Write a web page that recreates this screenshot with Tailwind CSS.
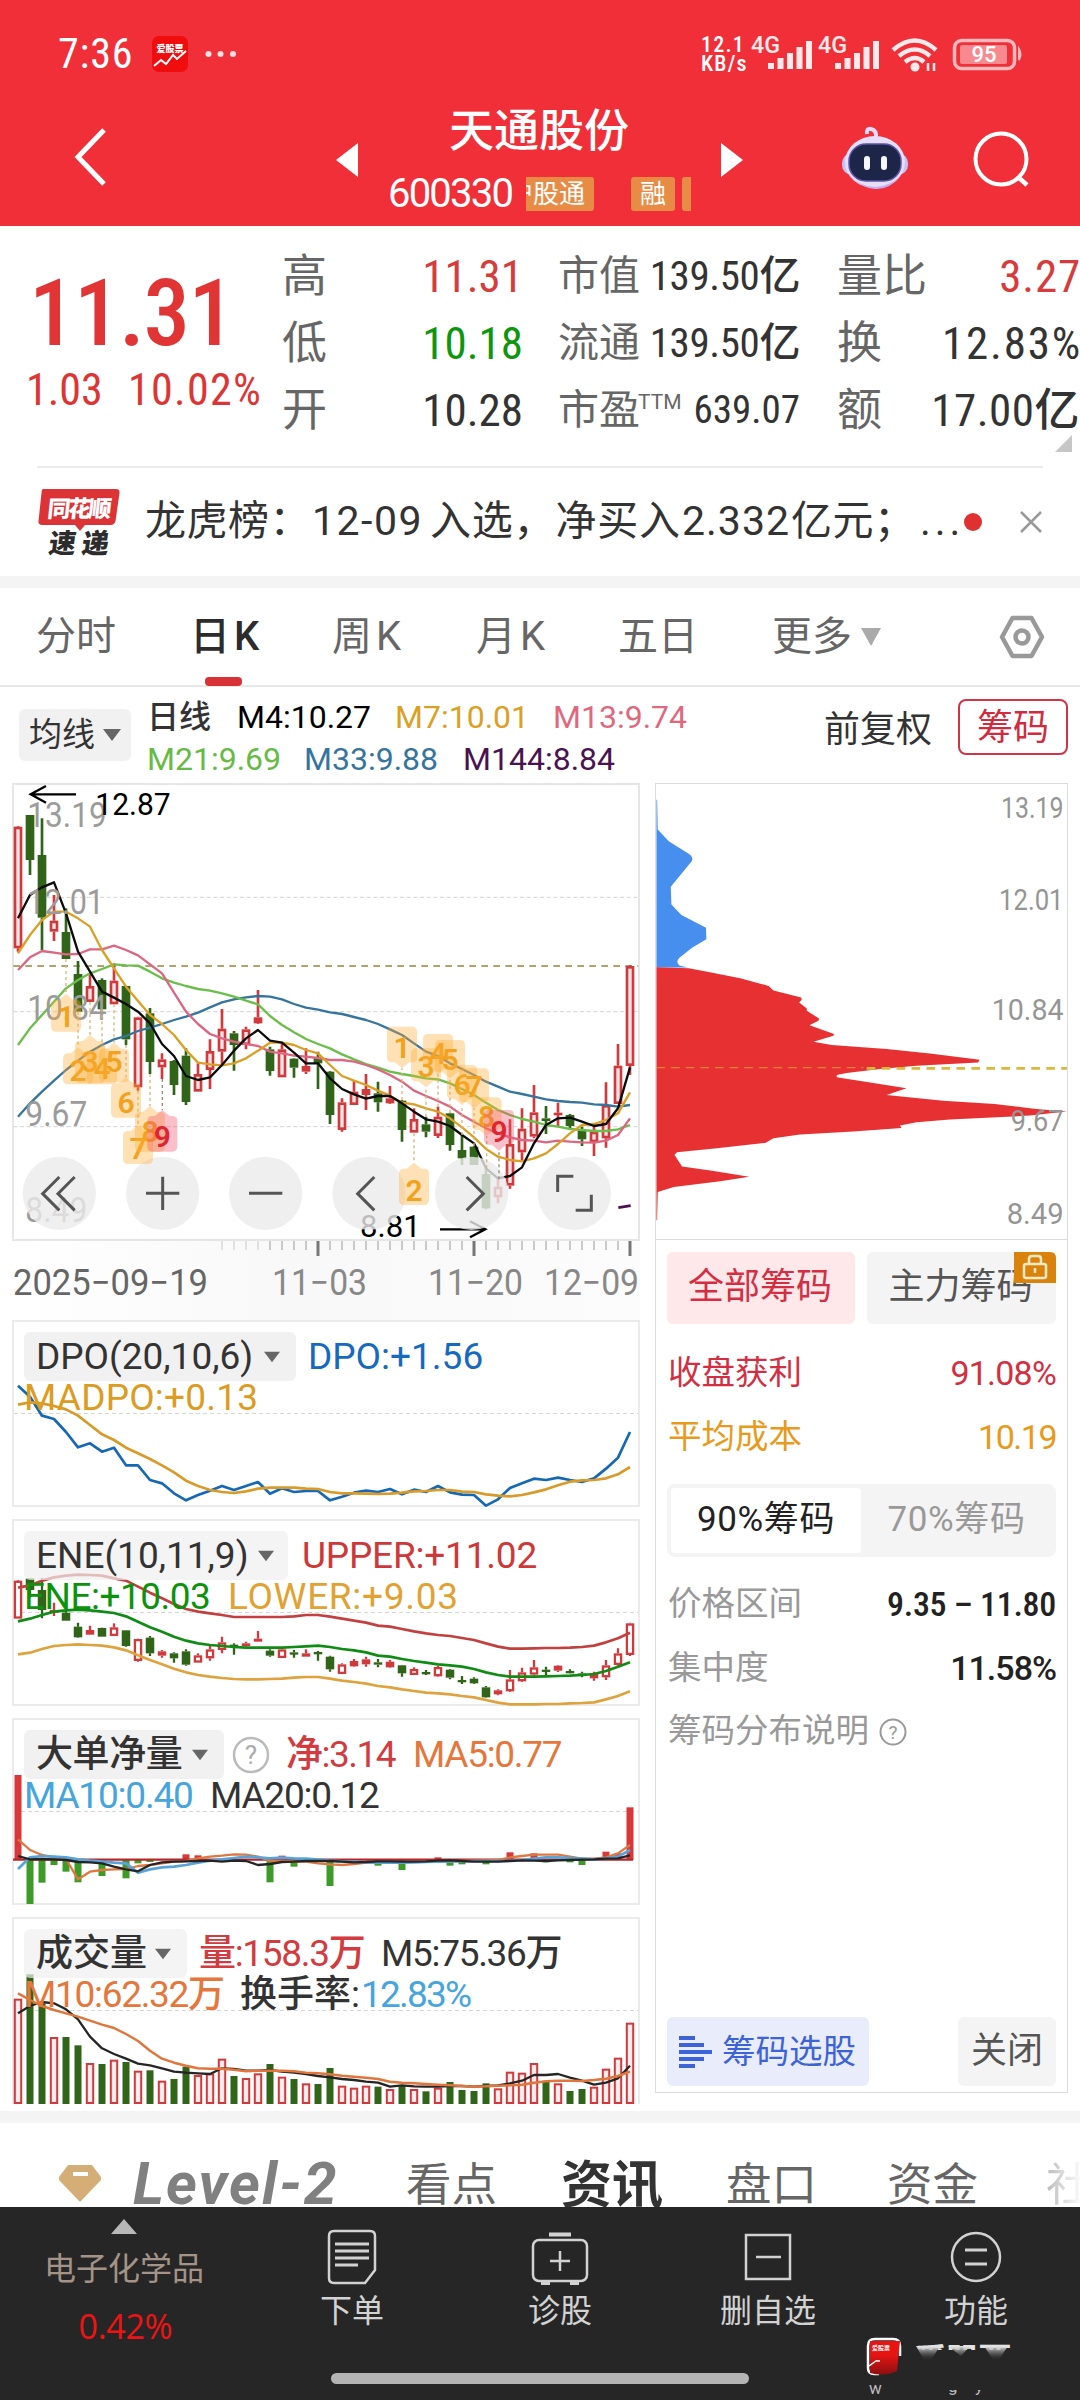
<!DOCTYPE html>
<html lang="zh-CN">
<head>
<meta charset="utf-8">
<title>天通股份 600330</title>
<script src="https://cdn.jsdelivr.net/npm/@tailwindcss/browser@4"></script>
</head>
<body class="bg-white">
<div class="w-[1080px] h-[2400px] overflow-hidden flex flex-col bg-white text-[#333] font-['Roboto','Noto_Sans_CJK_SC',sans-serif] whitespace-nowrap">

<!-- header -->
<header class="h-[226px] shrink-0 bg-[#f12f38] text-white flex flex-col">
  <div class="h-[108px] flex items-center pl-[58px] pr-[57px]">
    <span class="text-[42px] leading-none w-[94px] font-stretch-semi-condensed tracking-[0.8px]">7:36</span>
    <svg class="w-9 h-9" viewBox="0 0 36 36"><rect width="36" height="36" rx="7" fill="#f00d0d"/><text x="18" y="15.500" text-anchor="middle" font-size="9" font-weight="900" fill="#fff">爱股票</text><path d="M2 30l7-6 5 4 7-9 4 4 9-8" fill="none" stroke="#fff" stroke-width="2"/></svg>
    <svg class="w-8 h-2 ml-[17px]" viewBox="0 0 32 8"><g fill="#ffe0e0"><circle cx="3.500" cy="4" r="3"/><circle cx="15.500" cy="4" r="3"/><circle cx="28" cy="4" r="3"/></g></svg>
    <div class="ml-auto flex items-center">
      <div class="w-[51px] text-[22px] leading-[19px] font-medium font-stretch-semi-condensed tracking-[1.2px]">12.1<br>KB/s</div>
      <svg class="w-[130px] h-9 overflow-visible" viewBox="752 36 130 36"><g fill="#ffe9ea"><text x="751" y="53" font-size="23" font-weight="500" textLength="29" lengthAdjust="spacingAndGlyphs">4G</text><text x="818" y="53" font-size="23" font-weight="500" textLength="29" lengthAdjust="spacingAndGlyphs">4G</text>
      <path d="M768 63h6v6h-6zM777.500 58h6v11h-6zM787 53h6v16h-6zM796.500 47h6v22h-6zM806 41h6v28h-6zM835 63h6v6h-6zM844.500 58h6v11h-6zM854 53h6v16h-6zM863.500 47h6v22h-6zM873 41h6v28h-6z"/></g></svg>
      <svg class="w-12 h-9 ml-[9px]" viewBox="891 36 48 36"><g fill="none" stroke="#ffe9ea" stroke-width="4.500"><path d="M893 50q22-19 43 0M899 56q16-13 31 0M905 62q10-8 19 0"/></g><circle cx="915" cy="67" r="4.500" fill="#ffe9ea"/><path d="M928 63v8M934 63v8" stroke="#ffe9ea" stroke-width="2.500"/></svg>
      <svg class="w-[72px] h-9 ml-[12px]" viewBox="951 36 72 36"><rect x="954.500" y="40.500" width="60" height="28" rx="7" fill="none" stroke="#f9b9bd" stroke-width="3.500"/><rect x="960" y="45" width="47" height="19" rx="2" fill="#f88a8f"/><path d="M1019 49q3 5 0 11z" fill="#f9b9bd" stroke="#f9b9bd" stroke-width="2"/><text x="984" y="62" text-anchor="middle" font-size="22" font-weight="500" fill="#fff">95</text></svg>
    </div>
  </div>
  <div class="h-[118px] flex relative">
    <svg class="w-[34px] h-[62px] mt-[18px] ml-[73px]" viewBox="0 0 34 62"><path d="M31 4L5 31l26 27" fill="none" stroke="#fff" stroke-width="5"/></svg>
    <svg class="w-[22px] h-[34px] ml-[229px] mt-[35px]" viewBox="0 0 22 34"><path d="M22 0v34L0 17z" fill="#fff"/></svg>
    <div class="w-[363px] flex flex-col items-center">
      <div class="text-[45px] leading-[45px] font-medium -ml-px mt-px">天通股份</div>
      <div class="flex w-full pl-[30px] mt-5 items-center">
        <span class="text-[40px] leading-[40px] w-[138px] tracking-[-1.8px]">600330</span>
        <div class="w-[165px] h-[34px] flex overflow-hidden text-[26px] leading-[34px]">
          <span class="bg-[#e88c45] rounded-r-[3px] w-[68px] h-[34px] flex justify-end pr-[9px] shrink-0 overflow-hidden">沪股通</span>
          <span class="bg-[#e88c45] rounded-[3px] w-[44px] ml-[37px] text-center shrink-0">融</span>
          <span class="bg-[#e88c45] rounded-l-[3px] w-[9px] ml-[7px] shrink-0"></span>
        </div>
      </div>
    </div>
    <svg class="w-[22px] h-[34px] mt-[35px]" viewBox="0 0 22 34"><path d="M0 0v34l22-17z" fill="#fff"/></svg>
    <svg class="w-[68px] h-[64px] ml-[98px] mt-[18px]" viewBox="0 0 68 64"><path d="M26 8q-1-6 4-5 6 1 5 10" fill="none" stroke="#e6dcfa" stroke-width="4"/><rect x="1" y="27" width="66" height="22" rx="10" fill="#c3c3f5"/><ellipse cx="34" cy="36" rx="30" ry="26" fill="#e6defb"/><path d="M8 50q26 22 52 0-12 14-26 13T8 50z" fill="#c3b0f0"/><rect x="8" y="18" width="52" height="37" rx="17" fill="#1d2648" stroke="#5a55a8" stroke-width="1.500"/><path d="M26 33v8M43 33v8" stroke="#f6f6ff" stroke-width="6" stroke-linecap="round"/></svg>
    <svg class="w-[58px] h-[58px] ml-[63px] mt-[22px]" viewBox="0 0 58 58"><circle cx="29" cy="29" r="25.500" fill="none" stroke="#fff" stroke-width="4"/><path d="M46 47l9 8" stroke="#fff" stroke-width="4.500"/></svg>
  </div>
</header>

<!-- quote -->
<section class="h-[240px] shrink-0 flex relative font-[450]">
  <div class="w-[282px] pt-[48px] text-[#dd3535]">
    <div class="text-[93px] leading-[80px] pl-[29px] font-medium font-stretch-condensed tracking-[-1.5px] text-[#e13434]">11.31</div>
    <div class="flex text-[44px] leading-[50px] mt-[11px] pl-[26px] font-stretch-semi-condensed"><span class="w-[102px]">1.03</span><span class="tracking-[1.3px]">10.02%</span></div>
  </div>
  <div class="w-[241px] pt-[17px] text-[45px] leading-[67px] text-[#666] font-stretch-semi-condensed">
    <div class="flex justify-between"><span class="font-normal">高</span><span class="text-[#d63c3c]">11.31</span></div>
    <div class="flex justify-between"><span class="font-normal">低</span><span class="text-[#0f960f]">10.18</span></div>
    <div class="flex justify-between"><span class="font-normal">开</span><span class="text-[#333]">10.28</span></div>
  </div>
  <div class="w-[242px] ml-[35px] pt-[17px] text-[41px] leading-[67px] text-[#666] font-stretch-semi-condensed">
    <div class="flex justify-between"><span class="font-normal">市值</span><span class="text-[#333] tracking-[-0.4px]">139.50亿</span></div>
    <div class="flex justify-between"><span class="font-normal">流通</span><span class="text-[#333] tracking-[-0.4px]">139.50亿</span></div>
    <div class="flex justify-between"><span class="flex font-normal">市盈<span class="text-[21px] leading-[50px] -ml-0.5 font-stretch-normal">TTM</span></span><span class="text-[#333] text-[39px]">639.07</span></div>
  </div>
  <div class="w-[243px] ml-[37px] pt-[17px] text-[45px] leading-[67px] text-[#666] font-stretch-semi-condensed">
    <div class="flex justify-between"><span class="font-normal">量比</span><span class="text-[#d63c3c] tracking-[0.8px] -mr-px">3.27</span></div>
    <div class="flex justify-between"><span class="font-normal">换</span><span class="text-[#333] tracking-[1.8px] -mr-0.5">12.83%</span></div>
    <div class="flex justify-between"><span class="font-normal">额</span><span class="text-[#333] tracking-[0.5px]">17.00亿</span></div>
  </div>
  <svg class="absolute right-2 bottom-[14px] w-[17px] h-[17px]" viewBox="0 0 17 17"><path d="M17 0v17H0z" fill="#c6c6c6"/></svg>
</section>

<!-- news -->
<section class="h-[110px] shrink-0 mx-[37px] border-t-2 border-[#ebebeb] flex items-center">
  <svg class="w-[84px] h-[70px] -mt-px" viewBox="0 0 84 70"><path d="M6 2h73q4 0 3.500 4l-4 28q-1 4-5 4H48l-5 6-5-6H5q-4 0-3.500-4l3-28q0-4 2-4z" fill="#dc3337"/><text x="10" y="30" transform="skewX(-6) translate(3 0)" font-size="23" font-weight="900" fill="#fff" textLength="64">同花顺</text><text x="13" y="66" transform="skewX(-8) translate(7 0)" font-size="27" font-weight="900" fill="#2c2c2c" textLength="60">速递</text></svg>
  <span class="ml-6 text-[41px] text-[#333] w-[826px] flex"><span class="w-[167px] tracking-[0.5px]">龙虎榜：</span><span class="w-[118px] tracking-[1.5px]">12-09</span><span class="w-[252px] tracking-[0.8px]">入选，净买入</span><span class="w-[109px] tracking-[1px]">2.332</span><span class="w-[129px] tracking-[0.5px]">亿元；</span><span class="tracking-[4px]">...</span></span>
  <span class="size-[18px] rounded-full bg-[#e03030] -ml-[7px]"></span>
  <svg class="w-6 h-6 ml-[37px]" viewBox="0 0 24 24"><path d="M2 2l20 20M22 2L2 22" stroke="#999" stroke-width="2.500"/></svg>
</section>
<div class="h-3 shrink-0 bg-[#f4f4f4]"></div>

<!-- period tabs -->
<nav class="h-[99px] shrink-0 border-b-2 border-[#e8e8e8] flex items-center text-[40px] text-[#666] pl-9 relative">
  <span class="w-[154px]">分时</span>
  <span class="w-[142px] font-medium text-[#2c2c2c] tracking-[4px]">日K</span>
  <span class="w-[144px] tracking-[4px]">周K</span>
  <span class="w-[142px] tracking-[4px]">月K</span>
  <span class="w-[154px]">五日</span>
  <span>更多</span>
  <svg class="w-5 h-[18px] ml-[9px]" viewBox="0 0 20 18"><path d="M0 0h20L10 18z" fill="#aaa"/></svg>
  <svg class="w-[46px] h-[44px] ml-[118px]" viewBox="0 0 46 44"><path d="M13.500 3h19L43 22 32.500 41h-19L3 22z" fill="none" stroke="#999" stroke-width="4.500" stroke-linejoin="round"/><circle cx="23" cy="22" r="6.500" fill="none" stroke="#999" stroke-width="4.500"/></svg>
  <span class="absolute left-[205px] bottom-[-1px] w-[37px] h-[9px] rounded-[4px] bg-[#d83238]"></span>
</nav>

<!-- average line legend -->
<section class="h-[96px] shrink-0 flex">
  <div class="ml-[19px] mt-[22px] w-[112px] h-[52px] rounded-md bg-[#f1f1f1] flex items-center justify-center gap-2 text-[33px]">均线<svg class="w-[18px] h-3" viewBox="0 0 18 12"><path d="M0 0h18L9 12z" fill="#666"/></svg></div>
  <div class="ml-[16px] mt-[9px] text-[32px] leading-[42px] w-[677px] font-[450]">
    <div class="flex"><span class="w-[90px] font-medium">日线</span><span class="w-[158px] text-black">M4:10.27</span><span class="w-[158px] text-[#dba025]">M7:10.01</span><span class="text-[#e0687e]">M13:9.74</span></div>
    <div class="flex"><span class="w-[157px] text-[#66bb45]">M21:9.69</span><span class="w-[159px] text-[#35749f]">M33:9.88</span><span class="text-[#4a1250]">M144:8.84</span></div>
  </div>
  <div class="text-[36px] leading-[86px] w-[134px]">前复权</div>
  <div class="mt-3 w-[110px] h-14 border-2 border-[#cf3547] rounded-lg text-[#d02c40] text-[36px] leading-[54px] text-center">筹码</div>
</section>

<main class="h-[1328px] shrink-0 flex pl-3">
  <div class="w-[628px] flex flex-col">
    <svg id="kline" class="w-[628px] h-[458px] shrink-0" viewBox="36 39 1884 1374"></svg>
    <svg id="axis" class="w-[628px] h-[79px] shrink-0" viewBox="12 1241 628 79"></svg>

    <div class="relative h-[187px] border-2 border-[#ebebeb] shrink-0 font-[450]">
      <svg id="dpo" class="absolute -left-0.5 -top-0.5 w-[628px] h-[187px]" viewBox="12 1320 628 187"></svg>
      <div class="relative pt-2.5 pl-2.5 text-[37px] leading-[49px]">
        <div class="flex"><span class="w-[272px] h-[49px] bg-[#f0f0f0]/90 rounded-md pl-3 flex items-center">DPO(20,10,6)<svg class="w-4 h-3 ml-[11px]" viewBox="0 0 18 12"><path d="M0 0h18L9 12z" fill="#666"/></svg></span><span class="ml-3 text-[#156ac0]">DPO:+1.56</span></div>
        <div class="leading-[33px] text-[#dc9c22] tracking-[0.2px]">MADPO:+0.13</div>
      </div>
    </div>

    <div class="relative h-[187px] border-2 border-[#ebebeb] mt-3 shrink-0 font-[450]">
      <svg id="ene" class="absolute -left-0.5 -top-0.5 w-[628px] h-[187px]" viewBox="12 1519 628 187"></svg>
      <div class="relative pt-2.5 pl-2.5 text-[37px] leading-[49px]">
        <div class="flex"><span class="w-[264px] h-[49px] bg-[#f0f0f0]/70 rounded-md pl-3 flex items-center">ENE(10,11,9)<svg class="w-4 h-3 ml-[9px]" viewBox="0 0 18 12"><path d="M0 0h18L9 12z" fill="#666"/></svg></span><span class="ml-3.5 text-[#cf3838] tracking-[-0.2px]">UPPER:+11.02</span></div>
        <div class="leading-[33px] flex"><span class="w-[204px] text-[#0c930c] tracking-[-0.5px]">ENE:+10.03</span><span class="text-[#e2a232] tracking-[0.7px]">LOWER:+9.03</span></div>
      </div>
    </div>

    <div class="relative h-[187px] border-2 border-[#ebebeb] mt-3 shrink-0 font-[450]">
      <svg id="net" class="absolute -left-0.5 -top-0.5 w-[628px] h-[187px]" viewBox="12 1718 628 187"></svg>
      <div class="relative pt-2.5 pl-2.5 text-[37px] leading-[49px]">
        <div class="flex"><span class="w-[200px] h-[49px] bg-[#f0f0f0]/90 rounded-md pl-3 flex items-center tracking-[-0.4px]">大单净量<svg class="w-4 h-3 ml-[10px]" viewBox="0 0 18 12"><path d="M0 0h18L9 12z" fill="#666"/></svg></span><svg class="w-[38px] h-[38px] ml-2 mt-1.5" viewBox="0 0 38 38"><circle cx="19" cy="19" r="17" fill="none" stroke="#bbb" stroke-width="2.500"/><text x="19" y="28" font-size="26" text-anchor="middle" fill="#aaa">?</text></svg><span class="ml-4 w-[127px] text-[#d23b40] tracking-[-1.5px]">净:3.14</span><span class="text-[#e5773d] tracking-[-1.3px]">MA5:0.77</span></div>
        <div class="leading-[33px] flex tracking-[-1.2px]"><span class="w-[186px] text-[#46a5dc]">MA10:0.40</span><span>MA20:0.12</span></div>
      </div>
    </div>

    <div class="relative h-[187px] border-2 border-b-0 border-[#ebebeb] mt-3 shrink-0 font-[450]">
      <svg id="vol" class="absolute -left-0.5 -top-0.5 w-[628px] h-[187px]" viewBox="12 1917 628 187"></svg>
      <div class="relative pt-2.5 pl-2.5 text-[37px] leading-[49px]">
        <div class="flex"><span class="w-[163px] h-[49px] bg-[#f0f0f0]/70 rounded-md pl-3 flex items-center">成交量<svg class="w-4 h-3 ml-[8px]" viewBox="0 0 18 12"><path d="M0 0h18L9 12z" fill="#666"/></svg></span><span class="ml-3 w-[182px] text-[#d23b40] tracking-[-1.3px]">量:158.3万</span><span class="tracking-[-1.3px]">M5:75.36万</span></div>
        <div class="leading-[33px] flex tracking-[-1.3px]"><span class="w-[216px] text-[#e5773d]">M10:62.32万</span><span class="w-[121px] tracking-normal">换手率:</span><span class="text-[#46a5dc] tracking-[-1.8px]">12.83%</span></div>
      </div>
    </div>
  </div>

  <!-- chip distribution -->
  <aside class="ml-[15px] w-[413px] h-[1310px] border border-[#dcdcdc] flex flex-col">
    <svg id="chips" class="w-[411px] h-[456px] shrink-0 border-b border-[#dcdcdc]" viewBox="48 43 1233 1368"></svg>
    <div class="flex flex-col px-[11px] pt-3 text-[33.500px] grow">
      <div class="flex gap-3 h-[72px] text-[36px] leading-[71px] text-center relative">
        <span class="w-[188px] rounded-md bg-[#ffe8ea] text-[#d42e42] pr-0.5">全部筹码</span>
        <span class="w-[189px] rounded-md bg-[#f4f4f4] text-[#555] pr-0.5">主力筹码</span>
        <svg class="absolute right-0 top-0 w-[42px] h-[31px]" viewBox="0 0 42 31"><path d="M0 0h36q6 0 6 6v25H0z" fill="#d9820c"/><rect x="10" y="12" width="22" height="14" rx="2" fill="none" stroke="#ffe9c4" stroke-width="2.500"/><path d="M15 12V7q0-3 3-3h6q3 0 3 3v5M21 16v5" fill="none" stroke="#ffe9c4" stroke-width="2.500"/></svg>
      </div>
      <div class="flex justify-between items-center h-[64px] mt-[17px]"><span class="text-[#d42e42] ml-px">收盘获利</span><span class="text-[#d42e42] text-[34px] font-[450] tracking-[-0.8px]">91.08%</span></div>
      <div class="flex justify-between items-center h-[64px] text-[#e89a1c]"><span class="ml-px">平均成本</span><span class="text-[34px] font-[450] tracking-[-1.5px]">10.19</span></div>
      <div class="h-[73px] mt-[15px] rounded-lg bg-[#f4f4f4] p-1 flex leading-[64px] text-center"><span class="w-[190px] bg-white rounded text-[#222] text-[35px] tracking-[0.6px]">90%筹码</span><span class="grow text-[#999] text-[35px] tracking-[0.6px]">70%筹码</span></div>
      <div class="flex justify-between items-center h-[64px] mt-[15px]"><span class="text-[#999] ml-px">价格区间</span><span class="text-[#222] text-[34px] font-medium font-stretch-semi-condensed tracking-[-0.3px]">9.35 – 11.80</span></div>
      <div class="flex justify-between items-center h-[64px]"><span class="text-[#999] ml-px">集中度</span><span class="text-[#222] text-[34px] font-medium tracking-[-1px]">11.58%</span></div>
      <div class="flex items-center h-[63px] text-[#999] pl-px">筹码分布说明<svg class="w-7 h-7 ml-2.5" viewBox="0 0 28 28"><circle cx="14" cy="14" r="12.500" fill="none" stroke="#999" stroke-width="2"/><text x="14" y="20.500" font-size="19" text-anchor="middle" fill="#999">?</text></svg></div>
      <div class="mt-auto mb-[6px] flex justify-between h-[69px] leading-[65px]">
        <span class="w-[202px] rounded-md bg-[#e9ecfb] text-[#3c63d8] flex items-center gap-2.5 pl-3"><svg class="w-[33px] h-8" viewBox="0 0 33 32"><path d="M0 2h16M0 9h25M0 16h33M0 23h25M0 30h16" stroke="#3c63d8" stroke-width="4"/></svg><span>筹码选股</span></span>
        <span class="w-[98px] rounded-md bg-[#f4f4f4] text-[#555] text-[36px] leading-[69px] text-center">关闭</span>
      </div>
    </div>
  </aside>
</main>
<div class="h-3 shrink-0 bg-[#f4f4f4]"></div>

<!-- content tabs -->
<nav class="h-[84px] shrink-0 flex pl-[59px] text-[45.500px] leading-[125px] text-[#666] overflow-hidden">
  <svg class="w-[42px] h-[38px] mt-[41px] shrink-0" viewBox="0 0 42 38"><path d="M9 1h24l9 12q1 2-1 4L22 37q-1 1-2 0L1 17q-2-2-1-4z" fill="#d5ae77"/><rect x="14" y="8" width="15" height="4" fill="#fff"/></svg>
  <span class="ml-[32px] w-[273px] shrink-0 text-[59px] leading-[122px] font-bold italic text-[#808080] tracking-[2px]">Level-2</span>
  <span class="w-[155px] shrink-0">看点</span>
  <span class="w-[165px] shrink-0 text-[51px] font-bold text-[#333]">资讯</span>
  <span class="w-[161px] shrink-0">盘口</span>
  <span class="w-[159px] shrink-0">资金</span>
  <span class="bg-gradient-to-r from-[#bbb] to-white to-80% bg-clip-text text-transparent">社</span>
</nav>

<!-- bottom bar -->
<footer class="h-[193px] shrink-0 bg-[#262626] flex text-[32px] leading-[40px] text-[#d2d2d2] text-center relative">
  <div class="w-[248px] flex flex-col items-center text-[#a39487]">
    <svg class="w-[26px] h-[15px] mt-3" viewBox="0 0 26 15"><path d="M13 0l13 15H0z" fill="#b8b8b8"/></svg>
    <span class="mt-[15px]">电子化学品</span><span class="mt-[17px] ml-[3px] text-[34px] text-[#ee1414] font-['Open_Sans'] tracking-[-0.3px]">0.42%</span>
  </div>
  <div class="w-[208px] flex flex-col items-center"><svg class="w-[52px] h-[56px] mt-[22px]" viewBox="0 0 52 56"><path d="M8 2h36q5 0 5 5v34L39 54H8q-5 0-5-5V7q0-5 5-5z" fill="none" stroke="#d2d2d2" stroke-width="2.500"/><path d="M9 15h34M9 22h34M9 29h34M9 36h23" stroke="#d2d2d2" stroke-width="3"/></svg><span class="mt-1.5">下单</span></div>
  <div class="w-[208px] flex flex-col items-center"><svg class="w-[58px] h-[56px] mt-[22px]" viewBox="0 0 58 56"><rect x="2" y="11" width="54" height="41" rx="6" fill="none" stroke="#d2d2d2" stroke-width="2.500"/><path d="M18 5.500h22M10 54h9M39 54h9" stroke="#d2d2d2" stroke-width="4"/><path d="M29 22v20M19 32h20" stroke="#d2d2d2" stroke-width="2.500"/></svg><span class="mt-1.5">诊股</span></div>
  <div class="w-[208px] flex flex-col items-center"><svg class="w-[50px] h-[56px] mt-[22px]" viewBox="0 0 50 56"><path d="M3 6h44v44H3zM13 28h25" fill="none" stroke="#d2d2d2" stroke-width="2.500"/></svg><span class="mt-1.5">删自选</span></div>
  <div class="w-[208px] flex flex-col items-center"><svg class="w-[54px] h-[56px] mt-[22px]" viewBox="0 0 54 56"><circle cx="27" cy="28" r="24" fill="none" stroke="#d2d2d2" stroke-width="2.500"/><path d="M16 21h22M16 35h22" stroke="#d2d2d2" stroke-width="3"/></svg><span class="mt-1.5">功能</span></div>
  <span class="absolute left-[331px] top-[166px] w-[418px] h-[11px] rounded-full bg-[#b4b4b4]"></span>
  <svg class="absolute left-[860px] top-[128px] w-[220px] h-[65px]" viewBox="860 2335 220 65">
    <defs><linearGradient id="fade" x1="0" y1="0" x2="0" y2="1"><stop offset="0" stop-color="#e8e8e8"/><stop offset="1" stop-color="#262626" stop-opacity="0"/></linearGradient>
    <linearGradient id="redfade" x1="0" y1="0" x2="0" y2="1"><stop offset=".4" stop-color="#e81414"/><stop offset="1" stop-color="#8a1010"/></linearGradient>
    <clipPath id="top"><rect x="905" y="2340" width="175" height="10"/></clipPath>
    <clipPath id="low"><rect x="860" y="2384" width="220" height="14"/></clipPath></defs>
    <path d="M900 2356v-10q0-7-7-7h-18q-7 0-7 7v22q0 6 6 6h5" fill="none" stroke="#fff" stroke-width="2.500"/>
    <path d="M870 2341h30l-3 30q-12 6-27 2z" fill="url(#redfade)"/>
    <text x="872" y="2350" font-size="6" font-weight="700" fill="#fff">爱股票</text>
    <path d="M869 2366l7-5 4 0" fill="none" stroke="#fff" stroke-width="1.500"/>
    <g clip-path="url(#top)"><text x="914" y="2373" font-size="34" font-weight="700" fill="#e4e4e4" textLength="98">爱股票</text></g>
    <path d="M916 2346h24l-9 14h-7zM948 2346h22l-9 10zM984 2346h24l-10 15h-4z" fill="url(#fade)"/>
    <g clip-path="url(#low)" fill="#bbb" font-size="17"><text x="869" y="2394">w</text><text x="948" y="2392">g</text><text x="975" y="2392">y</text></g>
    <rect x="945" y="2382" width="50" height="8" fill="#262626"/>
  </svg>
</footer>
</div>

<script>
const RED='#d03a3c', GREEN='#2f6419';
const X=i=>18+12*i;
const el=id=>document.getElementById(id);
const poly=(pts,c,w)=>`<polyline points="${pts}" fill="none" stroke="${c}" stroke-width="${w}" stroke-linejoin="round"/>`;
const parse=s=>s.trim().split(/\s+/);
// candle: colour,high,top,bottom,low
function candles(s,fx,fy,bw,sw,fill){
  return parse(s).map((r,i)=>{
    const c=r[0]==='r'?RED:GREEN,[h,t,b,l]=r.slice(1).split(',').map(v=>fy(+v)),x=fx(i);
    let o=`<path d="M${x} ${h}V${t}M${x} ${b}V${l}" stroke="${c}" stroke-width="${sw}"/>`;
    if(r[0]==='r'&&b-t>sw*2.5) o+=`<rect x="${x-bw/2+sw/2}" y="${t+sw/2}" width="${bw-sw}" height="${b-t-sw}" fill="${fill}" stroke="${c}" stroke-width="${sw}"/>`;
    else o+=`<rect x="${x-bw/2}" y="${t}" width="${bw}" height="${Math.max(b-t,sw)}" fill="${c}"/>`;
    return o;
  }).join('');
}
const txt=(x,y,s,size,c,len,extra='')=>`<text x="${x}" y="${y}" font-size="${size}" fill="${c}" ${len?`textLength="${len}" lengthAdjust="spacingAndGlyphs"`:''} ${extra}>${s}</text>`;

// main chart, three units to a pixel
(()=>{
  const fx=i=>54+36*i;
  let o='<rect x="39" y="42" width="1878" height="1368" fill="#fff" stroke="#e6e6e6" stroke-width="6"/>';
  for(const y of [382,725,1070]) o+=`<path d="M40 ${y}H1915" stroke="#d4d4d4" stroke-width="3" stroke-dasharray="12 8"/>`;
  o+='<path d="M40 588H1915" stroke="#b3a26c" stroke-width="6" stroke-dasharray="20 16"/>';
  const grey='#9b9b9b', B='font-weight="450"';
  o+=candles(`r168,170,535,545 g135,135,270,315 g145,255,443,540 r375,452,485,513 g415,486,567,567 g573,612,725,725 r612,648,696,696 g625,630,718,718 r580,632,703,703 g648,648,808,825 r740,742,952,962 g714,730,876,912 r850,868,892,927 g870,873,945,975 g835,857,996,1005 r880,912,965,965 r808,843,900,957 r717,776,845,888 g783,790,825,902 r770,778,825,838 r660,742,760,762 g830,838,903,917 r820,838,922,922 g865,866,893,923 r835,888,905,912 g845,862,880,957
  g903,905,1035,1062 r985,997,1080,1085 r930,965,1005,1005 r912,957,975,1020 g935,970,997,1025 r948,985,1000,1002 g990,992,1080,1115 r1015,1047,1088,1088 g1040,1063,1085,1102 r1010,1040,1098,1104 g1028,1030,1125,1142 g1095,1140,1165,1185 g1128,1130,1185,1185 g1195,1212,1315,1318 r1228,1250,1282,1300 r1048,1122,1247,1256 r1015,1076,1147,1172 r945,1027,1100,1105 g1008,1045,1048,1092 r998,1028,1033,1070 g1032,1035,1068,1080 g1070,1078,1108,1128 r1062,1085,1117,1158 r937,1005,1105,1133 r822,887,1002,1002 r586,588,888,915`,fx,v=>v,26,8,'#fde8ea');
  const L=(s,c)=>{o+=poly(parse(s).map((y,i)=>fx(i)+','+y).join(' '),c,7)};
  L('1040 1000 965 932 900 872 845 825 808 798 783 773 762 750 740 728 712 697 688 682 678 680 688 702 713 719 727 732 741 750 762 778 795 820 845 858 880 897 915 935 950 965 972 980 988 993 996 998 1003 1005 1010 1005','#35749f');
  L('825 775 735 695 655 630 610 597 583 586 587 605 625 638 648 657 662 670 680 692 703 738 765 787 807 822 835 853 868 882 893 905 912 918 925 928 940 957 975 998 1020 1035 1047 1055 1065 1070 1077 1080 1083 1083 1078 1065','#6abf4b');
  L('600 562 543 548 553 552 538 538 527 540 556 583 610 668 725 762 792 805 815 822 828 845 850 857 860 864 870 870 875 885 898 915 935 962 978 993 1010 1035 1055 1075 1090 1102 1110 1112 1117 1112 1115 1117 1118 1112 1095 1045','#dd6680');
  L('550 495 450 425 425 445 470 540 595 650 693 735 762 795 840 878 883 886 880 865 842 818 818 825 840 850 885 918 932 945 962 977 998 1003 1015 1025 1045 1072 1102 1137 1160 1170 1174 1165 1150 1122 1090 1065 1062 1050 1030 967','#dc9f26');
  L('445 375 352 337 430 545 605 665 683 702 725 760 822 858 918 930 922 885 842 805 780 812 818 848 880 880 925 957 973 986 978 978 1000 1025 1048 1055 1068 1095 1120 1195 1225 1218 1192 1120 1065 1045 1043 1055 1068 1062 1015 892','#0c0c0c');
  o+=poly('1855,1313 1892,1307','#4a1250',8);
  o+=txt(82,170,'13.19',104,grey,238,B)+txt(82,433,'12.01',104,grey,230,B)+txt(82,750,'10.84',104,grey,238,B)+txt(76,1068,'9.67',104,grey,186,B)+txt(76,1357,'8.49',104,grey,186,B);
  o+=txt(286,134,'12.87',93,'#000',226)+txt(1080,1402,'8.81',93,'#000',182);
  o+='<path d="M92 73H228M138 48L92 73l46 25M1320 1378h136M1410 1354l46 24-46 24" fill="none" stroke="#000" stroke-width="7"/>';
  // round tool buttons
  const C='stroke="#555" stroke-width="9" fill="none"';
  for(const x of [178,488,797,1107,1415,1723]) o+=`<circle cx="${x}" cy="1270" r="110" fill="#ebebeb" opacity=".8"/>`;
  o+=`<path ${C} d="M178 1221l-50 50 50 50M224 1221l-50 50 50 50M438 1270h100M488 1220v100M747 1270h100M1123 1221l-50 50 50 50M1400 1221l50 50-50 50M1673 1266v-47h47M1774 1274v47h-47"/>`;
  // sequence markers: x, top, bottom, digit, baseline, direction, other end of the leader line
  for(const [x,t,b,d,base,up,from] of [[198,672,785,1,772,1,567],[234,832,943,2,932,1,725],[270,795,940,3,905,1,696],[306,825,943,4,928,1,718],[342,818,937,5,905,1,703],[378,922,1043,6,1030,1,825],[414,1065,1182,7,1168,1,962],[450,1008,1145,8,1115,1,912],[487,1020,1145,9,1130,1,927],
    [1206,770,895,1,865,0,990],[1278,835,952,3,920,0,1040],[1314,792,912,4,883,0,1010],[1350,810,925,5,900,0,1028],[1386,885,1005,6,975,0,1095],[1422,895,1015,7,980,0,1128],[1460,982,1098,8,1070,0,1195],[1497,1020,1142,9,1115,0,1228],[1242,1178,1305,2,1292,1,1090]]){
    const red=d===9, c=red?'#f0506a':'#ffac33', k=red?'#e02430':'#f2a21e';
    const w=45, y0=up?t+18:t, y1=up?b:b-18;
    o+=`<path d="M${x} ${from}V${up?t:b}" stroke="${red?'#9a8a78':'#dbb573'}" stroke-width="4" stroke-dasharray="9 9"/>`;
    o+=`<rect x="${x-w}" y="${y0}" width="90" height="${y1-y0}" rx="14" fill="${c}" opacity=".36"/>`;
    o+=`<path d="${up?`M${x-22} ${y0}L${x} ${t}l22 18z`:`M${x-22} ${y1}L${x} ${b}l22-18z`}" fill="${c}" opacity=".36"/>`;
    o+=txt(x,base,d,90,k,0,'text-anchor="middle" font-weight="600"');
  }
  el('kline').innerHTML=o;
})();

// date axis
(()=>{
  let o='<defs><linearGradient id="ax"><stop offset="0" stop-color="#fff"/><stop offset=".45" stop-color="#f8f8f8"/><stop offset="1" stop-color="#fcfcfc"/></linearGradient></defs><rect x="12" y="1241" width="628" height="79" fill="url(#ax)"/>';
  for(let x=222;x<=630;x+=12){const m=(x-318)%156===0;o+=`<path d="M${x} 1241v${m?15:9}" stroke="${m?'#777':'#999'}" stroke-width="${m?3:1}" opacity="${x<260?.5:1}"/>`}
  o+=txt(13,1295,'2025−09−19',36,'#666',195)+txt(272,1295,'11−03',36,'#888',95)+txt(428,1295,'11−20',36,'#888',95)+txt(544,1295,'12−09',36,'#888',95);
  el('axis').innerHTML=o;
})();

const series=(s,off,c,w=2.700)=>poly(parse(s).map((y,i)=>X(i)+','+(off+y/3)).join(' '),c,w);
const grid=y=>`<path d="M14 ${y}H638" stroke="#d6d6d6" stroke-width="1" stroke-dasharray="4 3"/>`;

el('dpo').innerHTML=grid(1413.5)
 +series('467 500 557 567 606 652 640 665 653 706 706 750 760 790 811 795 782 768 780 768 756 791 775 786 783 783 811 800 788 782 786 777 793 779 786 768 787 794 795 827 808 774 760 746 750 743 750 756 745 716 683 606',1230,'#1568b4')
 +series('524 517 520 528 538 557 585 613 630 653 670 687 706 727 752 768 780 786 789 784 776 773 773 773 776 777 786 790 790 791 792 791 788 784 783 780 780 785 786 793 797 799 795 787 778 766 755 751 750 745 733 711',1230,'#d89a28');

el('ene').innerHTML=grid(1612.5)
 +candles('r210,212,326,326 g205,205,240,262 g205,240,300,325 r278,300,308,318 g300,308,332,333 g338,350,382,383 r347,360,374,375 g353,354,380,380 r340,352,378,378 g360,361,408,410 r386,387,453,455 g378,383,430,438 r420,424,437,443 g427,430,445,458 g418,424,464,467 r430,436,458,458 r408,418,445,452 r380,397,420,430 g400,404,410,434 r395,400,408,410 r363,386,395,395 g418,422,437,440 r415,418,444,444 g420,427,431,443 r418,430,440,440 g423,426,432,452 g437,440,478,485 r460,463,492,492 r447,453,469,470 r440,448,463,470 g447,457,464,472 r450,455,472,473 g465,466,490,500 r472,477,495,495 g480,486,490,495 r467,471,499,500 g477,479,503,508 g498,510,513,522 g502,506,520,522 g528,532,562,563 r538,541,553,556 r480,508,544,546 r473,487,514,516 r450,472,494,500 g470,479,483,495 r466,467,482,486 g478,483,485,490 g485,490,495,502 r485,490,505,512 r450,466,502,510 r415,430,465,467 r338,340,435,438',X,v=>1510+v/3,8.5,2.3,'#fff')
 +series('233 226 212 202 197 194 195 197 205 212 230 248 265 282 297 305 310 315 321 321 321 321 321 319 315 315 320 326 332 338 347 350 357 364 370 375 378 384 390 400 410 416 416 415 414 414 413 411 407 397 385 368',1510,'#c24040')
 +series('334 326 315 305 301 299 301 305 309 319 335 352 365 380 392 400 405 408 411 413 413 413 413 411 409 407 411 417 421 427 437 440 447 453 458 463 466 470 477 487 495 500 500 500 499 498 497 495 492 483 470 457',1510,'#0f8c14')
 +series('433 428 417 408 405 403 405 407 412 421 436 450 463 476 487 495 500 504 507 508 508 507 506 503 501 501 506 512 516 521 528 532 538 543 548 550 553 558 562 570 578 583 583 583 582 582 580 579 577 568 558 544',1510,'#dfa23c');

(()=>{
  const bars={0:-75,1:312,2:248,3:195,4:215,5:247,7:228,9:235,10:190,11:186,14:163,15:166,21:247,22:167,23:200,26:258,30:197,32:210,35:172,36:197,37:193,39:193,41:157,43:160,44:187,46:187,47:195,49:155,50:160,51:22};
  let o=grid(1811.5);
  for(const i in bars){const v=bars[i],z=180,t=Math.min(v,z),h=Math.abs(v-z);o+=`<rect x="${X(+i)-3.5}" y="${1800+t/3}" width="7" height="${h/3}" fill="${v<z?'#d8383a':'#3d9b27'}"/>`}
  o+='<path d="M13 1859.700H633" stroke="#b5272c" stroke-width="2.200"/>'
  +series('118 150 165 172 177 238 215 210 208 207 198 195 190 185 183 175 170 167 163 164 170 183 183 185 185 190 193 195 192 188 186 186 186 185 185 184 184 183 182 181 180 172 168 164 164 164 170 176 176 172 160 135',1800,'#df7741',2.3)
  +series('207 172 168 170 172 178 182 185 188 190 218 208 202 200 195 188 182 178 174 170 172 175 173 175 176 179 182 184 185 187 188 188 188 187 186 185 184 184 183 183 183 182 180 176 172 172 174 176 178 175 170 150',1800,'#58a4d8')
  +series('168 178 177 178 180 186 187 190 200 208 214 195 187 185 184 183 182 185 182 183 195 192 186 185 183 183 183 185 187 186 184 184 185 185 184 182 181 183 185 185 185 183 181 182 183 181 180 179 178 176 175 166',1800,'#252525',2.3);
  el('net').innerHTML=o;
})();

(()=>{
  let o=grid(2010.5);
  parse('r596 g523 g610 r711 g711 g736 r789 g792 r779 g786 r812 g811 r842 g837 g800 r825 r820 r776 g828 r834 r820 g792 r830 g837 r850 g852 g804 r857 r863 r857 g860 r867 g855 r867 g874 r863 g846 g870 g873 g850 r865 r815 r818 r789 g845 r850 g873 g867 r860 r806 r773 r668').forEach((b,i)=>{
    const t=1800+b.slice(1)/3;
    o+=b[0]==='r'?`<rect x="${X(i)-3.2}" y="${t+1}" width="6.400" height="${2103-t-1}" fill="#fdecee" stroke="${RED}" stroke-width="2"/>`
      :`<rect x="${X(i)-3.5}" y="${t}" width="7" height="${2104-t}" fill="${GREEN}"/>`;
  });
  o+=series('640 618 606 610 628 658 710 745 762 776 791 796 805 815 818 820 822 805 807 812 812 810 815 818 822 828 832 837 840 845 848 860 856 859 860 860 858 858 860 858 856 850 842 825 825 822 833 842 854 848 835 797',1800,'#252525',2.3)
  +series('580 600 618 630 640 650 662 674 684 702 723 752 776 788 797 805 806 806 809 814 812 812 812 814 818 820 823 827 830 833 837 845 848 850 852 854 856 858 860 859 857 856 854 848 844 842 842 843 840 836 828 815',1800,'#e0763c',2.5);
  el('vol').innerHTML=o;
})();

// chip distribution profile
(()=>{
  const g='#959595';
  const lab=(y,s,w)=>txt(1272-w,y,s,90,g,w);
  el('chips').innerHTML='<path fill="#478fee" d="M48 90h2l2 90 33 35 60 38q16 11 9 22L91 352l2 53 30 32 74 38 1 35-43 25-37 30q-14 12-1 24l25 6H48z"/>'
  +'<path fill="#e63032" d="M48 594L145 597 197 607 300 627 385 650 400 664 483 685 485 692 477 700 500 718 500 725 537 748 535 755 508 768 582 795 580 800 520 818 575 828 740 840 870 853 1020 872 1015 880 830 890 720 900 620 912 590 918 590 925 700 942 800 958 740 978 910 995 1065 1005 1190 1020 1282 1028 1170 1040 930 1052 830 1060 780 1070 785 1077 640 1088 480 1097 400 1108 375 1122 230 1138 110 1150 102 1158 125 1193 210 1205 327 1224 240 1237 100 1255 52 1270 50 1355H48z"/>'
  +'<path d="M48 896H670" stroke="#dd9a34" stroke-width="3" stroke-dasharray="26 18"/><path d="M680 898H1282" stroke="#d9b83c" stroke-width="8" stroke-dasharray="26 19"/>'
  +lab(146,'13.19',188)+lab(422,'12.01',194)+lab(754,'10.84',216)+lab(1087,'9.67',159)+lab(1366,'8.49',171);
})();
</script>
</body>
</html>
